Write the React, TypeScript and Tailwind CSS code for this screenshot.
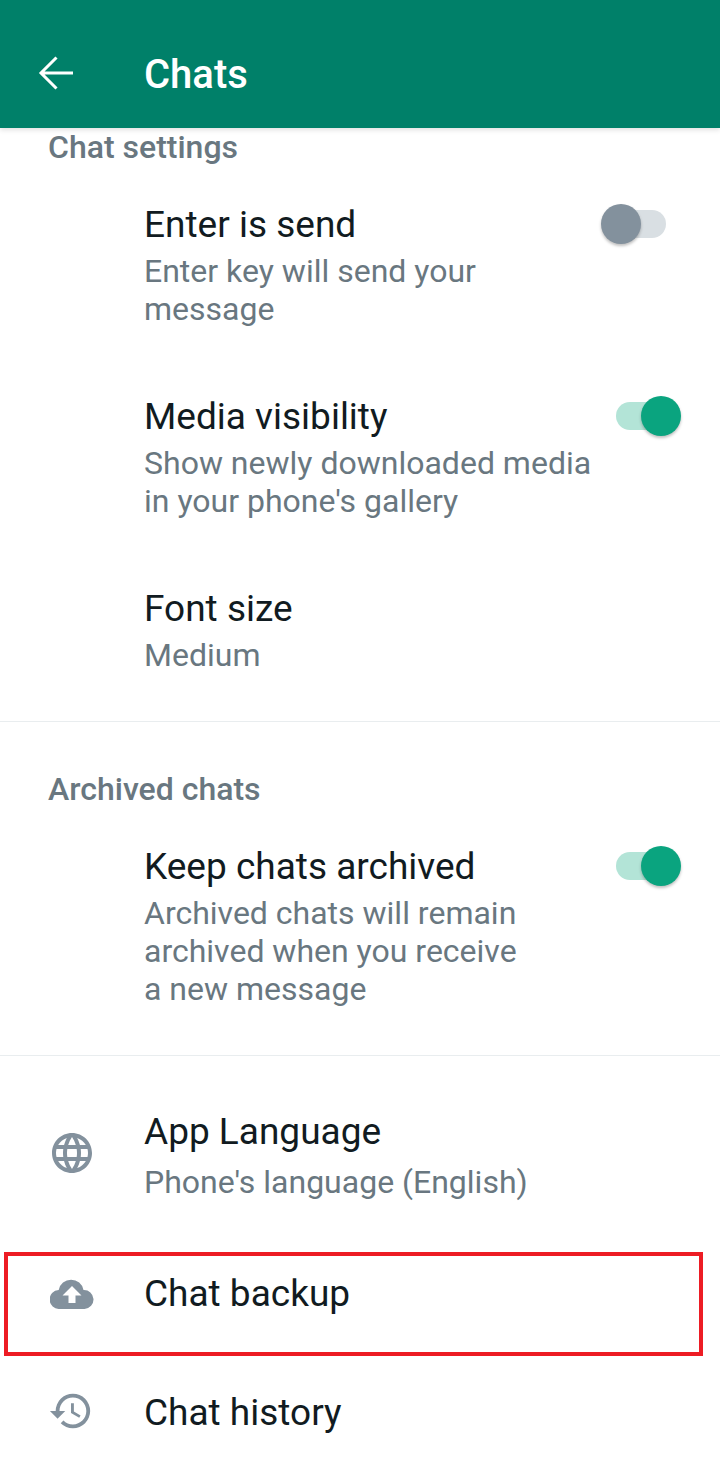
import { MdHistory, MdLanguage } from 'react-icons/md';
import type { ReactNode } from 'react';

function Toggle({ on }: { on: boolean }) {
  return (
    <div className="relative mt-[-2px] h-[28px] w-[50px] shrink-0">
      <div className={`h-full w-full rounded-full ${on ? 'bg-[#b3e4d7]' : 'bg-[#d9dfe3]'}`} />
      <div
        className={`absolute top-[-6px] h-[40px] w-[40px] rounded-full shadow-[0_2px_3px_rgba(0,0,0,0.25)] ${
          on ? 'left-[25px] bg-[#0aa47f]' : 'left-[-15px] bg-[#83919d]'
        }`}
      />
    </div>
  );
}

interface RowProps {
  title: string;
  lines?: string[];
  toggle?: boolean;
  icon?: ReactNode;
  subGap?: string;
  className: string;
}

function Row({ title, lines = [], toggle, icon, subGap = 'mt-[7px]', className }: RowProps) {
  return (
    <div className={`flex ${className}`}>
      <div className="flex w-[144px] shrink-0 justify-center">{icon}</div>
      <div className="min-w-0 flex-1">
        <div className="flex h-[40px] items-center justify-between pr-[54px]">
          <span className="text-[37px] leading-[40px] text-[#111b21]">{title}</span>
          {toggle !== undefined && <Toggle on={toggle} />}
        </div>
        <div className={subGap}>
          {lines.map((line) => (
            <div key={line} className="h-[38px] text-[32px] leading-[38px] whitespace-nowrap text-[#697780]">
              {line}
            </div>
          ))}
        </div>
      </div>
    </div>
  );
}

function SectionTitle({ children, className }: { children: string; className?: string }) {
  return <div className={`pl-[48px] text-[32px] leading-[38px] font-medium text-[#697780] ${className}`}>{children}</div>;
}

export default function App() {
  return (
    <div className="relative h-[1476px] w-[720px] overflow-hidden bg-white font-['Roboto',sans-serif]">
      {/* toolbar */}
      <div className="relative z-10 flex h-[128px] items-center bg-[#008069] pt-[22px] shadow-[0_2px_5px_rgba(0,0,0,0.12)]">
        <div className="mt-[-4px] flex w-[144px] justify-center pr-[32px]">
          <svg width="36" height="36" viewBox="0 0 36 36" fill="none" stroke="white" strokeWidth="3">
            <path d="M35 18H4M18.500 2.500 3 18l15.500 15.500" />
          </svg>
        </div>
        <span className="text-[40px] leading-[44px] font-medium text-white">Chats</span>
      </div>

      <SectionTitle>Chat settings</SectionTitle>
      <Row className="mt-[39px]" title="Enter is send" lines={['Enter key will send your', 'message']} toggle={false} />
      <Row className="mt-[69px]" title="Media visibility" lines={['Show newly downloaded media', "in your phone's gallery"]} toggle />
      <Row className="mt-[69px]" title="Font size" lines={['Medium']} />

      <div className="mt-[47px] h-px bg-[#e9edef]" />

      <SectionTitle className="mt-[48px]">Archived chats</SectionTitle>
      <Row
        className="mt-[39px]"
        title="Keep chats archived"
        lines={['Archived chats will remain', 'archived when you receive', 'a new message']}
        toggle
      />

      <div className="mt-[47px] h-px bg-[#e9edef]" />

      <Row
        className="mt-[56px]"
        title="App Language"
        subGap="mt-[11px]"
        lines={["Phone's language (English)"]}
        icon={<MdLanguage className="mt-[17px] text-[48px] text-[#83919d]" />}
      />
      <Row
        className="mt-[73px]"
        title="Chat backup"
        icon={
          <svg width="44" height="32" viewBox="0 0 44 32" className="mt-[3px]">
            <path
              fill="#83919d"
              fillRule="evenodd"
              d="M9.500 32A9.500 9.500 0 0 1 8.700 13 12.600 12.600 0 0 1 33.500 13 9.500 9.500 0 0 1 34.500 32ZM22 9l-9.500 9.500h6V26h7v-7.500h6Z"
            />
          </svg>
        }
      />
      <Row
        className="mt-[72px]"
        title="Chat history"
        icon={<MdHistory className="mt-[-5px] mr-[2px] text-[46px] text-[#83919d]" />}
      />

      {/* red highlight drawn over the screenshot */}
      <div className="absolute top-[1252px] left-[4px] h-[104px] w-[699px] border-[4px] border-[#ed1c24]" />
    </div>
  );
}
